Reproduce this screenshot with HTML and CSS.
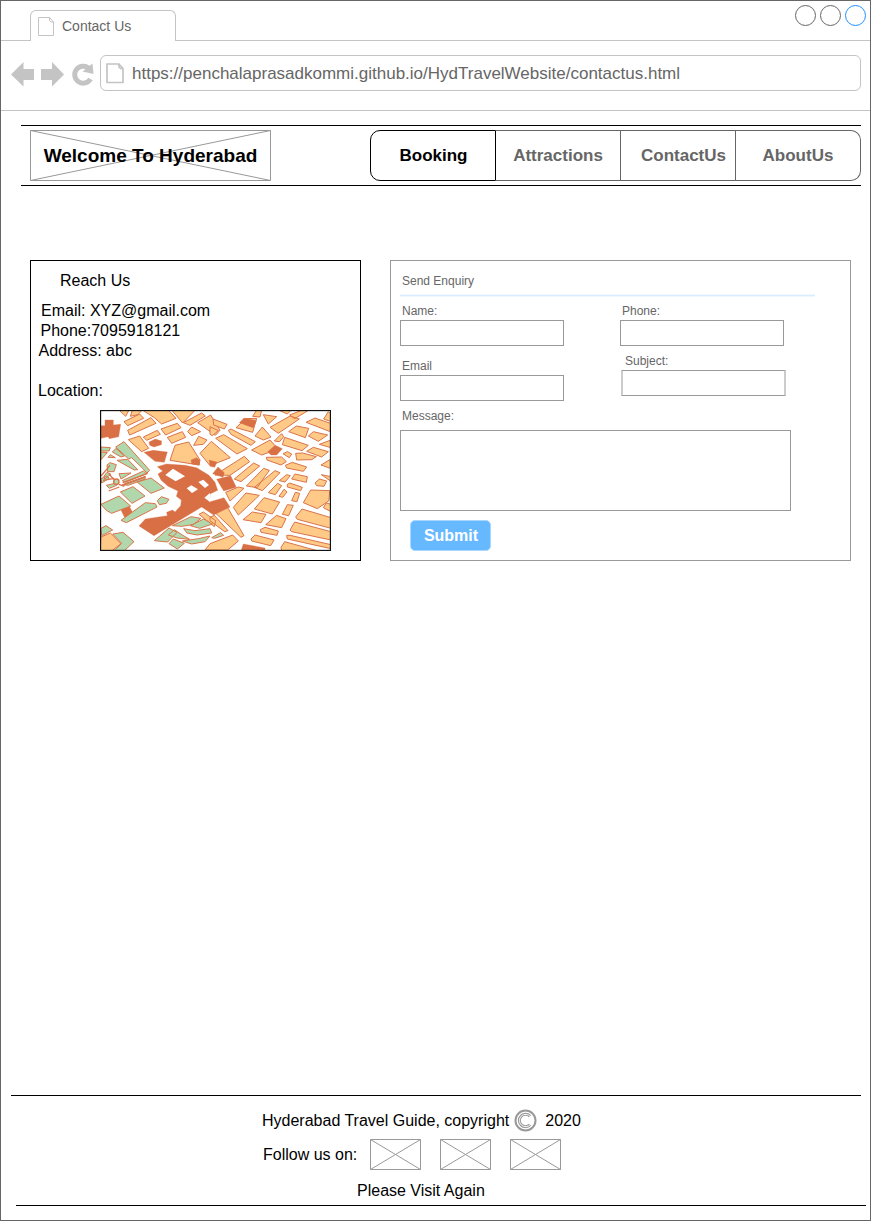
FILE: index.html
```html
<!DOCTYPE html>
<html lang="en">
<head>
<meta charset="utf-8">
<title>Contact Us</title>
<link rel="stylesheet" href="styles.css">
</head>
<body>
<div class="window">
  <div class="titlebar">
    <div class="tab">
      <svg class="tab-icon" width="17" height="20" viewBox="0 0 17 20"><path d="M.5.5H11.5L15.500 5V18.500H.5ZM11.500.5V3.500L13 5H15.500" fill="#fff" stroke="#c4c4c4"/></svg>
      <span>Contact Us</span>
    </div>
    <div class="controls"><i class="dot"></i><i class="dot"></i><i class="dot blue"></i></div>
  </div>
  <div class="toolbar">
    <svg class="tools" width="86" height="28" viewBox="0 0 86 28" fill="#c4c4c4"><path d="M0 14.500L12.500 2V9H23V20H12.500V26.500ZM53 14.500L41 2V9H30V20H41V26.500Z"/><path d="M79.500 19A8.500 8.500 0 1 1 77.500 8" fill="none" stroke="#c4c4c4" stroke-width="5"/><path d="M81.500 3.500L82.500 14L71.500 11.500Z"/></svg>
    <div class="address">
      <svg width="19" height="21" viewBox="0 0 19 21"><path d="M1 1H13L17 5.500V19.500H1ZM13 1V4L14.500 5.500H17" fill="#fff" stroke="#c4c4c4" stroke-width="1.700"/></svg>
      <span>https://penchalaprasadkommi.github.io/HydTravelWebsite/contactus.html</span>
    </div>
  </div>
  <header class="header">
    <div class="logo">
      <svg class="cross" width="241" height="51"><path d="M.5.500H240.500V50.500H.5ZM.5.500L240.500 50.500M240.500.500L.5 50.500" fill="none" stroke="#999"/></svg>
      <span class="logo-text">Welcome To Hyderabad</span>
    </div>
    <nav class="nav">
      <a class="nav-item active">Booking</a><a class="nav-item">Attractions</a><a class="nav-item contact">ContactUs</a><a class="nav-item last">AboutUs</a>
    </nav>
  </header>
  <main class="main">
    <section class="reach">
      <h2>Reach Us</h2>
      <p class="mail">Email: XYZ@gmail.com</p>
      <p class="tel">Phone:7095918121</p>
      <p class="addr">Address: abc</p>
      <p class="loc">Location:</p>
      <svg class="map" width="231" height="141" viewBox="15 15 693 423">
        <rect x="15" y="15" width="693" height="423" fill="#fff"/>
        <g fill="#ffca88" stroke="#d9744a" stroke-width="3" stroke-linejoin="round">
          <!-- north-west blocks -->
          <path d="M72 15H102L92 34ZM112 15H142L128 29L106 34ZM87 50L134 27L146 40L98 62ZM98 76L168 38L183 55L104 90ZM142 15H220L243 40L200 57L178 38ZM230 15H301L263 54ZM265 53L320 24L331 33L285 61ZM308 53L347 30L375 76L361 91ZM145 96L187 76L196 88L155 106ZM100 104L134 93L161 130L140 140ZM198 72L247 55L258 68L212 90ZM217 97L262 80L272 97L230 115ZM278 80L290 66L317 80L290 92ZM296 121L311 94L336 105L325 118Z"/>
          <path d="M240 121L281 111L315 165L312 180L225 166ZM315 145L349 109L406 158L345 182Z"/>
          <!-- north-east blocks -->
          <path d="M354 42L396 58L388 72L356 60ZM345 65L370 77L352 92L345 88ZM423 68L453 41L485 40L473 82ZM473 34L485 15H500L495 36ZM505 29L545 35L520 57ZM525 67L585 33L613 42L550 85ZM550 15H589L577 27ZM584 30L622 15H642L599 41ZM633 52L660 39L706 55V80ZM581 80L604 63L641 70L631 98ZM640 93L655 80L698 90L670 109ZM686 42L700 20L708 28V50ZM673 118L708 105V128ZM400 76L408 72L481 110L468 121L408 88ZM362 100L386 89L457 131L426 147ZM480 93L502 66L528 96L505 105ZM538 108L560 86L566 95L554 110ZM562 119L569 97L640 121L621 137ZM470 135L525 105L540 122L520 143L500 150ZM564 146L577 140L590 147L583 158ZM602 145L623 144L664 155L650 164L605 165ZM635 139L655 127L700 140L680 156ZM514 157L560 156L574 170L558 180L516 165ZM571 181L592 172L635 186L625 199L575 189ZM678 180L706 163V190Z"/>
          <!-- streets radiating to the south-east -->
          <path d="M360 210L448 154L464 170L405 211ZM418 222L476 174L494 183L438 230ZM454 243L506 190L523 196L486 248ZM478 247L540 197L555 203L502 257ZM520 263L548 235L560 242L541 269ZM553 227L575 209L586 212L570 231ZM577 238L584 234L622 247L617 257L577 246ZM590 222L600 207L637 215L634 232ZM552 274L567 253L576 261L563 277ZM590 287L601 262L614 265L606 290ZM660 234L673 222L695 228L687 244L665 242ZM625 293L647 255L704 257L702 287L667 311ZM679 209L708 215V229ZM685 308L694 294L708 298V320ZM602 336L621 312L708 338V370L607 343ZM585 375L599 351L708 380V405L590 380ZM575 391H585L708 419V431L577 402ZM558 427L569 410L670 438H560ZM392 262L430 246L447 250L405 288ZM415 307L453 264L493 271L430 330ZM478 312L507 278L554 291L532 327ZM444 344L472 321L513 328L498 353ZM562 328L577 299L595 301L581 332ZM512 359L545 331L573 341L560 368ZM496 374L510 367L550 378L546 391L498 382ZM468 402L480 390L537 405L527 422L470 408Z"/>
          <!-- south blocks -->
          <path d="M355 318L398 308L447 392L438 397ZM345 337L358 331L399 377L389 380L345 347ZM345 416L413 390L430 408L398 435H330ZM312 328L325 321L362 347L358 365ZM18 396L46 384L78 416L50 438H15Z"/>
        </g>
        <g fill="#d97045" stroke="#d9744a">
          <path d="M18 62H30V45H55V60L77 58L71 95L43 101L39 95L18 100ZM162 111L181 102L200 108L199 119L177 126L164 121ZM147 142L175 136L217 141L208 172L180 169ZM288 165L305 158L314 166L313 181L290 177ZM342 165L366 171L359 187L345 184ZM433 53L447 39L484 47L475 69ZM518 140L541 121L562 131L545 150L528 150Z"/>
          <path d="M187 185L214 177L270 181L305 188L342 211L360 232L368 256L345 267L343 291L387 278L405 306L356 330L320 306L177 392L132 363L151 342L217 332L215 322L233 315L240 321L257 302L259 285L244 274L249 258L219 244L198 225L189 207L203 198ZM353 206L369 186L388 203L384 217ZM365 223L407 212L424 247L386 258ZM445 417L510 429V438H438ZM76 311L103 304L115 326L90 340Z"/>
        </g>
        <path d="M211 210L234 191L270 214L242 229ZM275 250L289 241L309 253L291 264ZM310 231L325 224L342 240L330 249ZM328 278L345 264V291Z" fill="#fff"/>
        <!-- parks -->
        <g fill="#b1d8ad" stroke="#d9744a" stroke-width="3" stroke-linejoin="round">
          <path d="M62 126L87 110L164 196L156 204L143 190L110 158L101 162ZM52 141L63 130L88 153L78 156ZM66 166L98 163L128 194L118 195ZM18 126L46 128L42 138H18ZM18 141L37 143L18 164ZM39 157L46 149L61 158ZM36 180L45 173L64 179L57 200H38ZM27 214L36 202L48 208L29 222ZM72 206L108 204L78 222ZM82 227L145 198L154 206L92 232ZM82 239L151 214L150 222L100 241ZM18 221L35 213L43 220L20 234ZM34 241L69 233L65 241L43 250ZM18 298L72 273L107 303L50 325L34 316ZM76 261L114 245L150 273L111 295ZM126 231L168 219L208 249L168 265ZM187 287L199 275L222 283L214 295L193 299ZM78 346L151 293L181 296L186 306L94 353ZM18 370L33 362L53 375L20 392ZM53 387L84 382L117 410L87 438H56L80 415Z"/>
          <path d="M232 362L288 335L318 340L296 358L262 364ZM178 407L222 369L246 382L218 411ZM286 362L326 342L352 357L314 370ZM266 371L300 377L345 371L350 384L306 390L276 384ZM220 390L238 374L262 390L284 403L246 399ZM222 416L235 402L268 415L247 432ZM262 408L310 401L345 393L330 410L290 417ZM350 398L377 383L386 391L359 400Z"/>
        </g>
        <g fill="none" stroke="#d9744a" stroke-width="4"><path d="M18 213L45 181M24 226L58 220M41 258L73 246M42 208L58 224M72 238L88 244M83 233L158 205M85 240L151 216"/><circle cx="64" cy="230" r="8" fill="#b1d8ad"/></g>
        <rect x="16.500" y="16.500" width="690" height="420" fill="none" stroke="#111" stroke-width="4"/>
      </svg>
    </section>
    <section class="enquiry">
      <h3>Send Enquiry</h3>
      <div class="rule"></div>
      <div class="fields">
        <div class="col">
          <label>Name:</label><input class="box">
          <label class="spaced">Email</label><input class="box">
        </div>
        <div class="col">
          <label>Phone:</label><input class="box">
          <label class="subject">Subject:</label><input class="box soft">
        </div>
      </div>
      <label class="message">Message:</label>
      <textarea class="box area"></textarea>
      <button class="submit">Submit</button>
    </section>
  </main>
  <footer class="footer">
    <div class="copy">
      <span>Hyderabad Travel Guide, copyright</span>
      <svg width="23" height="23" viewBox="0 0 23 23" fill="none"><circle cx="11.500" cy="11.500" r="10" stroke="#999" stroke-width="2"/><path d="M16 7.200A6.200 6.200 0 1 0 16 15.800" stroke="#999" stroke-width="3"/><path d="M16.500 7.700A6.200 6.200 0 1 0 16.500 15.300" stroke="#fff" stroke-width=".9"/></svg>
      <span>2020</span>
    </div>
    <div class="follow">
      <span>Follow us on:</span>
      <svg width="51" height="31"><path d="M.5.500H50.500V30.500H.5ZM.5.500L50.500 30.500M50.500.500L.5 30.500" fill="none" stroke="#999"/></svg>
      <svg width="51" height="31"><path d="M.5.500H50.500V30.500H.5ZM.5.500L50.500 30.500M50.500.500L.5 30.500" fill="none" stroke="#999"/></svg>
      <svg width="51" height="31"><path d="M.5.500H50.500V30.500H.5ZM.5.500L50.500 30.500M50.500.500L.5 30.500" fill="none" stroke="#999"/></svg>
    </div>
    <p class="visit">Please Visit Again</p>
  </footer>
  <div class="baseline"></div>
</div>
</body>
</html>
```

FILE: styles.css
```css
* { box-sizing: border-box; }
body { margin: 0; background: #fff; color: #000; font: 16px/20px "Liberation Sans", Arial, sans-serif; }
h2, h3, p { margin: 0; font-weight: 400; }
svg { display: block; flex: none; }
.window { display: flex; flex-direction: column; width: 871px; height: 1221px; border: 1px solid #666; overflow: hidden; }

.titlebar { display: flex; justify-content: space-between; height: 40px; padding: 9px 4px 0 29px; border-bottom: 1px solid #c4c4c4; }
.tab { display: flex; gap: 7px; width: 146px; height: 31px; padding: 5px 0 0 7px; border: 1px solid #c4c4c4; border-bottom: 0; border-radius: 6px 6px 0 0; background: #fff; color: #666; font-size: 14px; white-space: nowrap; }
.tab-icon { margin-top: 1px; }
.controls { display: flex; gap: 4px; margin-top: -5px; }
.dot { width: 21px; height: 21px; border: 1px solid #666; border-radius: 50%; }
.blue { border-color: #1e90ff; }

.toolbar { display: flex; height: 70px; padding: 14px 9px 0 10px; border-bottom: 1px solid #c4c4c4; }
.tools { margin: 5px 3px 0 0; }
.address { display: flex; align-items: center; gap: 7px; width: 761px; height: 36px; padding-left: 5px; border: 1px solid #c4c4c4; border-radius: 6px; color: #666; font-size: 17px; }
.address span { padding-top: 2px; }

.header { display: flex; justify-content: space-between; width: 840px; height: 61px; margin: 14px 0 0 20px; padding: 4px 0 0 9px; border: solid #000; border-width: 1px 0; }
.logo { display: grid; width: 241px; height: 51px; }
.logo > * { grid-area: 1 / 1; }
.logo-text { place-self: center; font-size: 19px; font-weight: 700; white-space: nowrap; }
.nav { display: flex; width: 491px; height: 51px; font-size: 17px; font-weight: 700; }
.nav-item { display: flex; align-items: center; justify-content: center; width: 125px; border: solid #666; border-width: 1px 1px 1px 0; color: #666; }
.active { width: 126px; padding-left: 1px; border-color: #000; border-left-width: 1px; border-radius: 10px 0 0 10px; color: #000; }
.contact { width: 115px; padding-left: 11px; }
.last { border-radius: 0 10px 10px 0; }

.main { display: flex; gap: 29px; margin: 74px 0 0 29px; }
.reach { width: 331px; height: 301px; padding: 10px 0 0 7px; border: 1px solid #000; }
.reach h2 { margin: 0 0 10px 22px; font-size: 16px; }
.mail { padding-left: 3px; }
.tel { padding-left: 2.500px; }
.addr { padding-left: .5px; }
.loc { margin-top: 20px; }
.map { margin: 9px 0 0 62px; }

.enquiry { width: 461px; height: 301px; padding: 10px 0 0 9px; border: 1px solid #999; color: #666; font-size: 12px; }
.enquiry h3 { padding-left: 2px; font-size: 12px; line-height: 20px; }
.rule { width: 415px; height: 3px; margin: 3px 0 7px; border: solid #eff7ff; border-width: 1px 0; background: #d9edff; }
.fields { display: flex; gap: 56px; height: 97px; }
.col { display: flex; flex-direction: column; width: 164px; }
.enquiry label { display: block; flex: none; height: 16px; padding-left: 2px; line-height: 14px; }
.box { display: block; width: 164px; height: 26px; margin: 0; padding: 0; border: 1px solid #999; border-radius: 0; background: #fff; outline: 0; resize: none; }
.enquiry .spaced { margin-top: 13px; }
.enquiry .subject { margin-top: 8px; padding-left: 5px; }
.soft { width: 165px; margin-left: 1px; border-left: 2px solid #ccc; border-right: 2px solid #ccc; }
.enquiry .message { margin-top: 8px; height: 21px; }
.area { width: 391px; height: 81px; }
.submit { display: block; width: 81px; height: 31px; margin: 9px 0 0 10px; padding: 0 0 0 1px; border: 1px solid #a8d7ff; border-radius: 5px; background: #66b8ff; color: #fff; font: 700 16px/28px "Liberation Sans", Arial, sans-serif; }

.footer { width: 850px; margin: 534px 0 0 10px; padding-top: 13px; border-top: 1px solid #000; }
.copy { display: flex; align-items: center; padding-left: 251px; }
.copy svg { margin: 0 8px 0 5px; }
.follow { display: flex; align-items: center; gap: 19px; margin-top: 7px; padding-left: 252px; }
.follow span { width: 88px; white-space: nowrap; }
.visit { margin-top: 11px; padding-left: 346px; }
.baseline { width: 850px; height: 1px; margin: 4px 0 0 15px; background: #000; }
```
